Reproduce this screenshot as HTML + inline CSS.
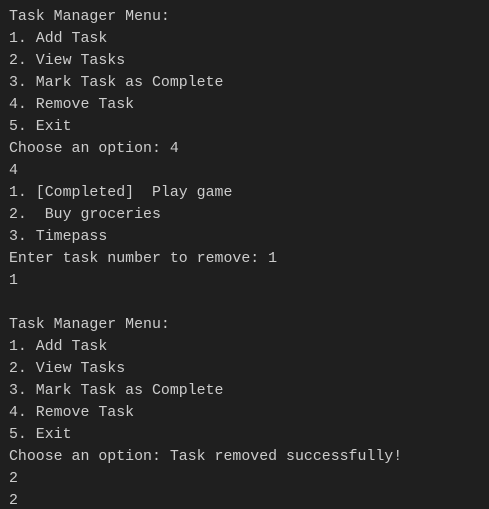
<!DOCTYPE html>
<html><head><meta charset="utf-8"><style>
html,body{margin:0;padding:0;background:#1f1f1f;width:489px;height:509px;overflow:hidden}
pre{margin:0;padding:6px 0 0 9px;font-family:"Liberation Mono",monospace;font-size:14.9px;line-height:22px;color:#cccccc}
</style></head><body><pre>Task Manager Menu:
1. Add Task
2. View Tasks
3. Mark Task as Complete
4. Remove Task
5. Exit
Choose an option: 4
4
1. [Completed]  Play game
2.  Buy groceries
3. Timepass
Enter task number to remove: 1
1

Task Manager Menu:
1. Add Task
2. View Tasks
3. Mark Task as Complete
4. Remove Task
5. Exit
Choose an option: Task removed successfully!
2
2</pre></body></html>
